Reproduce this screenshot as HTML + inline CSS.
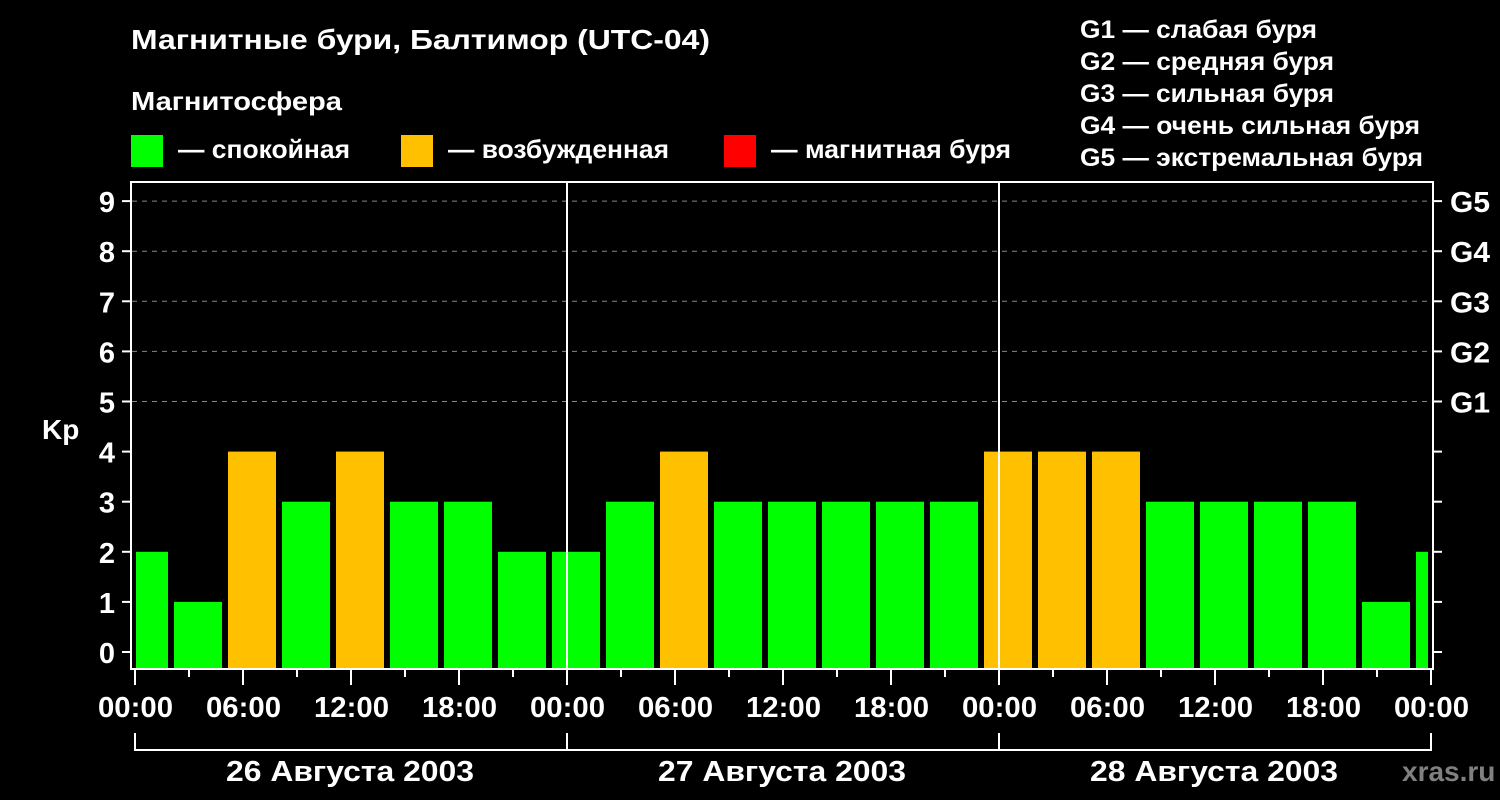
<!DOCTYPE html>
<html><head><meta charset="utf-8"><style>
html,body{margin:0;padding:0;background:#000;width:1500px;height:800px;overflow:hidden}
svg{display:block}
text{font-family:"Liberation Sans",Arial,sans-serif;font-weight:bold;fill:#fff}
</style></head><body>
<svg id="s" width="1500" height="800" xmlns="http://www.w3.org/2000/svg">
<rect width="1500" height="800" fill="#000"/>
<text x="131" y="49" font-size="28" textLength="579" lengthAdjust="spacingAndGlyphs">Магнитные бури, Балтимор (UTC-04)</text>
<text x="131" y="110" font-size="26" textLength="211" lengthAdjust="spacingAndGlyphs">Магнитосфера</text>
<rect x="131" y="135" width="32" height="32" fill="#00ff00"/>
<text x="178" y="158" font-size="26" textLength="172" lengthAdjust="spacingAndGlyphs">— спокойная</text>
<rect x="401" y="135" width="32" height="32" fill="#ffc000"/>
<text x="448" y="158" font-size="26" textLength="221" lengthAdjust="spacingAndGlyphs">— возбужденная</text>
<rect x="724" y="135" width="32" height="32" fill="#ff0000"/>
<text x="771" y="158" font-size="26" textLength="240" lengthAdjust="spacingAndGlyphs">— магнитная буря</text>
<g font-size="25">
<text x="1080" y="38" textLength="237" lengthAdjust="spacingAndGlyphs">G1 — слабая буря</text>
<text x="1080" y="70" textLength="254" lengthAdjust="spacingAndGlyphs">G2 — средняя буря</text>
<text x="1080" y="102" textLength="254" lengthAdjust="spacingAndGlyphs">G3 — сильная буря</text>
<text x="1080" y="134" textLength="340" lengthAdjust="spacingAndGlyphs">G4 — очень сильная буря</text>
<text x="1080" y="166" textLength="343" lengthAdjust="spacingAndGlyphs">G5 — экстремальная буря</text>
</g>
<text x="42" y="439" font-size="28">Kp</text>
<g id="g"></g>
<text x="226" y="781" font-size="29" textLength="248" lengthAdjust="spacingAndGlyphs">26 Августа 2003</text>
<text x="658" y="781" font-size="29" textLength="248" lengthAdjust="spacingAndGlyphs">27 Августа 2003</text>
<text x="1090" y="781" font-size="29" textLength="248" lengthAdjust="spacingAndGlyphs">28 Августа 2003</text>
<text x="1402" y="781" font-size="28" style="fill:#808080">xras.ru</text>
</svg>
<script>
var g=document.getElementById('g'),h='';
function Y(v){return 652-50.1*v;}
for(var v=0;v<=9;v++){var y=Y(v);
 if(v>=5)h+='<line x1="132" x2="1432" y1="'+y+'" y2="'+y+'" stroke="#888" stroke-dasharray="5,5" stroke-width="1"/>';
 h+='<line x1="122" x2="131" y1="'+y+'" y2="'+y+'" stroke="#fff" stroke-width="2"/>';
 h+='<line x1="1433" x2="1442" y1="'+y+'" y2="'+y+'" stroke="#fff" stroke-width="2"/>';
 h+='<text x="107" y="'+(y+11)+'" font-size="29" text-anchor="middle">'+v+'</text>';
 if(v>=5)h+='<text x="1450" y="'+(y+11)+'" font-size="29" textLength="40" lengthAdjust="spacingAndGlyphs">G'+(v-4)+'</text>';
}
var vals=[1,4,3,4,3,3,2,2,3,4,3,3,3,3,3,4,4,4,3,3,3,3,1,2];
h+='<rect x="136" y="'+Y(2)+'" width="32" height="'+(668-Y(2))+'" fill="#00ff00"/>';
for(var i=0;i<vals.length;i++){var x=174+54*i,w=(i==23)?12:48,v=vals[i];
 h+='<rect x="'+x+'" y="'+Y(v)+'" width="'+w+'" height="'+(668-Y(v))+'" fill="'+(v>=4?'#ffc000':'#00ff00')+'"/>';}
h+='<path d="M131 182 H1433 V669 H131 Z" fill="none" stroke="#fff" stroke-width="2"/>';
h+='<line x1="567" x2="567" y1="182" y2="668" stroke="#fff" stroke-width="2"/>';
h+='<line x1="999" x2="999" y1="182" y2="668" stroke="#fff" stroke-width="2"/>';
var labs=['00:00','06:00','12:00','18:00'];
for(var k=0;k<=24;k++){var x=135+54*k;
 h+='<line x1="'+x+'" x2="'+x+'" y1="669" y2="'+(k%2==0?685:677)+'" stroke="#fff" stroke-width="2"/>';
 if(k%2==0)h+='<text x="'+(x-37)+'" y="717" font-size="29" textLength="75" lengthAdjust="spacingAndGlyphs">'+labs[(k/2)%4]+'</text>';}
h+='<path d="M135 733 V750 H1431 V733 M567 733 V750 M999 733 V750" fill="none" stroke="#fff" stroke-width="2"/>';
g.innerHTML=h;
</script>
</body></html>
